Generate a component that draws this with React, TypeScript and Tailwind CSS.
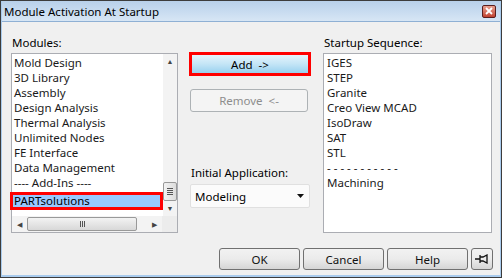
import React from 'react';

const modules = [
  'Mold Design',
  '3D Library',
  'Assembly',
  'Design Analysis',
  'Thermal Analysis',
  'Unlimited Nodes',
  'FE Interface',
  'Data Management',
  '---- Add-Ins ----',
];

const sequence = ['IGES', 'STEP', 'Granite', 'Creo View MCAD', 'IsoDraw', 'SAT', 'STL', '- - - - - - - - - - -', 'Machining'];

function WinButton({ children, className = '' }: { children: React.ReactNode; className?: string }) {
  return (
    <div
      className={`flex items-center justify-center rounded-[3px] border border-[#707070] bg-gradient-to-b from-[#f2f2f2] via-[#ebebeb] to-[#d5d5d5] text-[#111] ${className}`}
    >
      {children}
    </div>
  );
}

export default function App() {
  return (
    <div className="w-[502px] h-[278px] bg-[#3c3c3c] p-px font-['Segoe_UI','Noto_Sans',sans-serif] text-[11.5px] leading-[15px] text-black">
      <div className="flex h-full flex-col bg-[#a9cbed] px-px pb-[2px]">
        {/* title bar */}
        <div className="flex h-[20px] shrink-0 items-center justify-between bg-gradient-to-b from-[#b8d0ea] to-[#d7e6f5] pl-[2px] pr-[4px]">
          <span className="text-[11.5px] text-black">Module Activation At Startup</span>
          <div className="flex h-[13px] w-[14px] items-center justify-center rounded-[2px] border border-[#5a1e1e] bg-gradient-to-b from-[#e8a090] to-[#c04030]">
            <svg width="8" height="8" viewBox="0 0 8 8">
              <path d="M1 1 L7 7 M7 1 L1 7" stroke="white" strokeWidth="1.8" />
            </svg>
          </div>
        </div>

        <div className="flex flex-1 flex-col border-t border-[#8fb0d4] bg-[#f0f0f0] pb-[5px] pl-[9px] pr-[7px] pt-[13px]">
          <div className="flex gap-[12px]">
            {/* modules */}
            <div className="flex w-[167px] flex-col">
              <div className="h-[18px] pl-[1px] text-black">Modules:</div>
              <div className="h-[180px] border border-[#abadb3] bg-white">
                <div className="flex h-[162px]">
                  <div className="flex-1 pt-px">
                    {modules.map((m) => (
                      <div key={m} className="h-[15px] pl-[2px] text-[#1a1a1a] whitespace-nowrap">
                        {m}
                      </div>
                    ))}
                    <div className="ml-[-2px] mt-[2px] h-[18px] w-[153px] border-[3px] border-[#ff0000] bg-[#99c9ff] pl-[1px] leading-[12px]">
                      PARTsolutions
                    </div>
                  </div>
                  {/* vertical scrollbar */}
                  <div className="flex w-[15px] flex-col items-center bg-[#f3f3f3]">
                    <div className="flex h-[15px] items-center justify-center text-[7px] text-[#444]">▲</div>
                    <div className="flex-1" />
                    <div className="flex h-[19px] w-[14px] flex-col items-center justify-center gap-px rounded-[2px] border border-[#999] bg-gradient-to-r from-[#f3f3f3] to-[#dcdcdc]">
                      <div className="h-px w-[6px] bg-[#555]" />
                      <div className="h-px w-[6px] bg-[#555]" />
                      <div className="h-px w-[6px] bg-[#555]" />
                      <div className="h-px w-[6px] bg-[#555]" />
                    </div>
                    <div className="flex h-[15px] items-center justify-center text-[7px] text-[#444]">▼</div>
                  </div>
                </div>
                {/* horizontal scrollbar */}
                <div className="flex h-[16px]">
                  <div className="flex flex-1 items-center bg-[#f3f3f3]">
                    <div className="flex w-[15px] items-center justify-center text-[7px] text-[#444]">◀</div>
                    <div className="flex h-[14px] w-[110px] items-center justify-center gap-px rounded-[2px] border border-[#999] bg-gradient-to-b from-[#f3f3f3] to-[#d8d8d8]">
                      <div className="h-[6px] w-px bg-[#555]" />
                      <div className="h-[6px] w-px bg-[#555]" />
                      <div className="h-[6px] w-px bg-[#555]" />
                    </div>
                    <div className="flex-1" />
                    <div className="flex w-[15px] items-center justify-center text-[7px] text-[#444]">▶</div>
                  </div>
                  <div className="w-[15px] bg-[#ececec]" />
                </div>
              </div>
            </div>

            {/* middle column */}
            <div className="flex w-[121px] flex-col pt-[17px]">
              <div className="ml-[-1px] flex h-[24px] w-[122px] items-center justify-center border-[3px] border-[#ff0000] bg-gradient-to-b from-[#e5f4fc] via-[#c4e5f6] to-[#98d1ef]">
                <span>Add&nbsp;&nbsp;-&gt;</span>
              </div>
              <div className="mt-[13px] flex h-[23px] w-[118px] items-center justify-center rounded-[3px] border border-[#adb2b5] bg-[#f4f4f4] text-[#8d8d8d]">
                Remove&nbsp;&nbsp;&lt;-
              </div>
              <div className="mt-[53px] h-[19px] pl-[1px]">Initial Application:</div>
              <div className="flex h-[24px] w-[120px] items-center justify-between rounded-[2px] border border-[#e0e0e0] bg-[#fbfbfb] pl-[4px] pr-[4px]">
                <span>Modeling</span>
                <svg width="8" height="5" viewBox="0 0 8 5">
                  <path d="M0 0 H7 L3.5 4 Z" fill="#111" />
                </svg>
              </div>
            </div>

            {/* startup sequence */}
            <div className="flex w-[169px] flex-col">
              <div className="h-[18px] pl-[1px]">Startup Sequence:</div>
              <div className="h-[180px] border border-[#abadb3] bg-white pt-px">
                {sequence.map((s) => (
                  <div key={s} className="h-[15px] pl-[3px] text-[#1a1a1a] whitespace-nowrap">
                    {s}
                  </div>
                ))}
              </div>
            </div>
          </div>

          {/* bottom buttons */}
          <div className="mt-auto flex justify-end gap-[3px]">
            <WinButton className="h-[22px] w-[81px]">OK</WinButton>
            <WinButton className="h-[22px] w-[81px]">Cancel</WinButton>
            <WinButton className="h-[22px] w-[81px]">Help</WinButton>
            <WinButton className="h-[22px] w-[22px]">
              <svg width="14" height="10" viewBox="0 0 14 10">
                <path d="M0 5 H5 M5 1 V9 M5 3 H8 L12 1 V9 L8 7 H5" stroke="#111" strokeWidth="1.3" fill="none" />
              </svg>
            </WinButton>
          </div>
        </div>
      </div>
    </div>
  );
}
